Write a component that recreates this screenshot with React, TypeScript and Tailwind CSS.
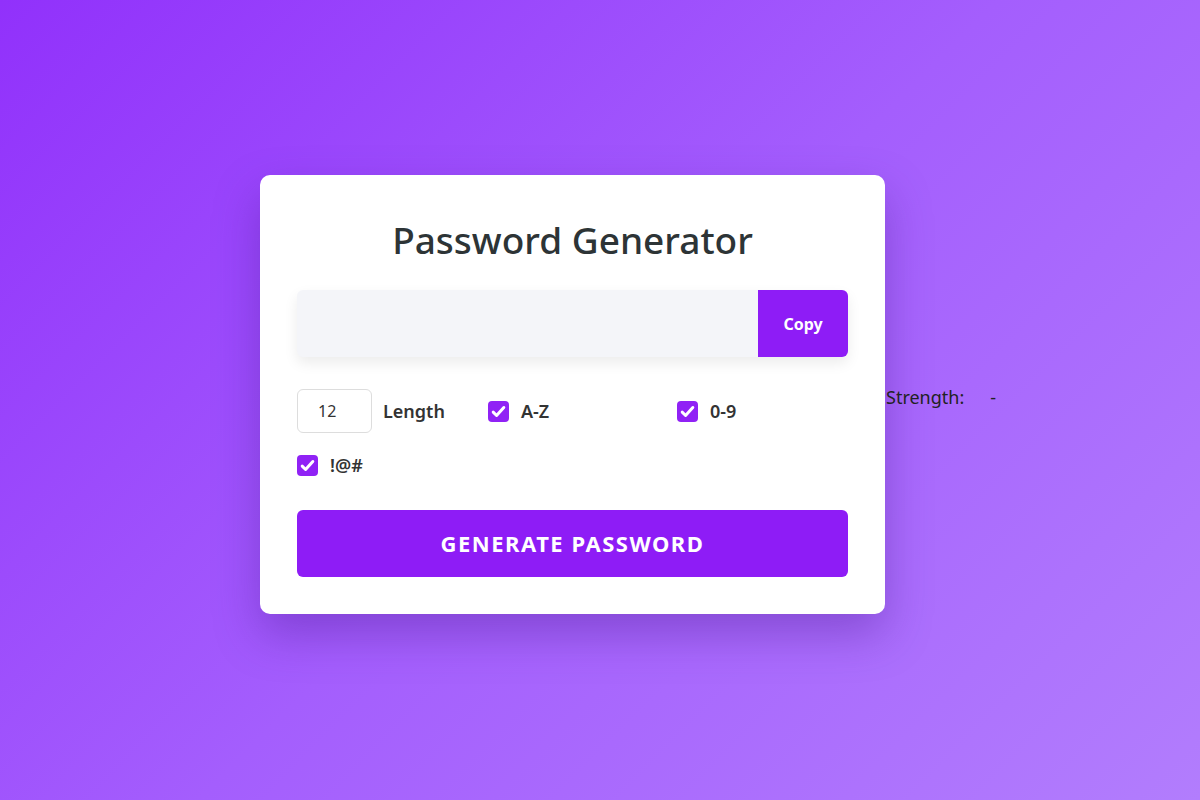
import React, { useState } from "react";

export default function App() {
  const [length, setLength] = useState(12);
  const [upper, setUpper] = useState(true);
  const [digits, setDigits] = useState(true);
  const [symbols, setSymbols] = useState(true);
  const [password] = useState("");

  const Check = ({ checked, onChange, label }: { checked: boolean; onChange: () => void; label: string }) => (
    <label className="flex items-center gap-3 cursor-pointer">
      <span
        onClick={onChange}
        className={`w-[21px] h-[21px] rounded-[4px] flex items-center justify-center ${checked ? "bg-[#9022f5]" : "bg-white border border-gray-400"}`}
      >
        {checked && (
          <svg viewBox="0 0 16 16" className="w-[17px] h-[17px]" fill="none" stroke="white" strokeWidth="2.8" strokeLinecap="round" strokeLinejoin="round">
            <path d="M3 8.6l3.2 3.2L13 4.2" />
          </svg>
        )}
      </span>
      <span className="text-[18px] font-semibold text-[#333]">{label}</span>
    </label>
  );

  return (
    <div
      className="w-full h-[800px] flex items-start bg-[linear-gradient(135deg,#9131fb_0%,#a45efd_50%,#b27dfd_100%)]"
      style={{ fontFamily: '"Noto Sans", "Open Sans", sans-serif' }}
    >
      <div className="ml-[260px] mt-[175px] w-[625px] bg-white rounded-[10px] shadow-[0_20px_45px_rgba(70,20,140,0.35)] px-[37px] pt-[38px] pb-[37px]">
        <h1 className="text-center text-[37px] leading-[54px] font-medium text-[#2d3436]">Password Generator</h1>

        {/* output field */}
        <div className="mt-[23px] flex h-[67px] rounded-[6px] bg-[#f4f5f9] shadow-[0_6px_14px_rgba(0,0,0,0.08)]">
          <input
            readOnly
            value={password}
            className="flex-1 bg-transparent outline-none px-4 text-[18px] text-[#333]"
          />
          <button className="w-[90px] bg-[#8e1cf6] text-white text-[16px] font-bold rounded-r-[6px]">Copy</button>
        </div>

        {/* options */}
        <div className="mt-[32px] grid grid-cols-[191px_189px_189px] gap-y-[20px] items-center">
          <div className="flex items-center gap-[11px]">
            <input
              type="number"
              value={length}
              onChange={(e) => setLength(Number(e.target.value))}
              className="w-[75px] h-[44px] rounded-[6px] border border-[#ddd] pl-[20px] text-[16px] text-[#333] outline-none [appearance:textfield] [&::-webkit-inner-spin-button]:appearance-none"
            />
            <span className="text-[18px] font-semibold text-[#333]">Length</span>
          </div>
          <Check checked={upper} onChange={() => setUpper(!upper)} label="A-Z" />
          <div className="relative">
            <Check checked={digits} onChange={() => setDigits(!digits)} label="0-9" />
            <div className="absolute left-[209px] top-[-14px] whitespace-nowrap text-[18px] text-[#222] flex gap-[26px]">
              <span>Strength:</span>
              <span>-</span>
            </div>
          </div>
          <div className="h-[25px] flex items-center">
            <Check checked={symbols} onChange={() => setSymbols(!symbols)} label="!@#" />
          </div>
        </div>

        <button className="mt-[32px] w-full h-[67px] rounded-[6px] bg-[#8e1cf6] text-white text-[22px] font-bold uppercase tracking-[1.5px]">
          Generate Password
        </button>
      </div>
    </div>
  );
}
